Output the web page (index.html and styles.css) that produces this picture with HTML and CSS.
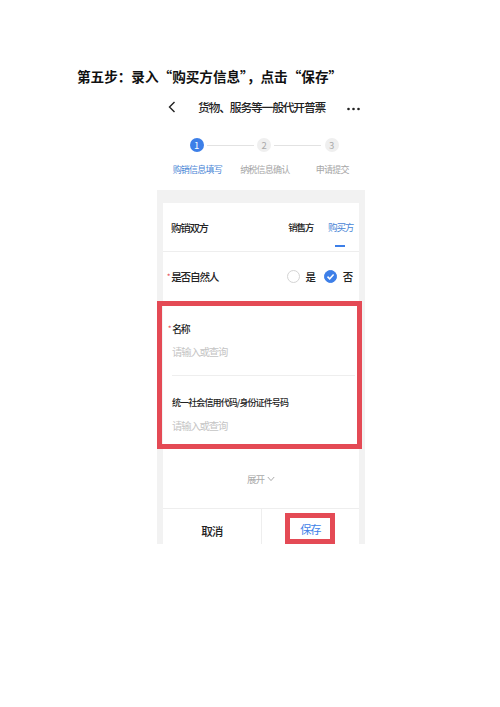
FILE: index.html
```html
<!DOCTYPE html>
<html lang="zh-CN">
<head>
    <meta charset="UTF-8">
    <meta name="viewport" content="width=device-width, initial-scale=1.0">
    <title>第五步</title>
    <link rel="stylesheet" href="styles.css">
</head>
<body>
    <p class="intro">第五步：录入“购买方信息”，点击“保存”</p>

    <div class="phone">
        <!-- 顶部导航 -->
        <div class="nav">
            <svg class="back" width="8" height="12" viewBox="0 0 8 12"><polyline points="6.5,1 1.5,6 6.5,11" fill="none" stroke="#222" stroke-width="1.4"/></svg>
            <span class="nav-title">货物、服务等一般代开普票</span>
            <svg class="more" width="13" height="4" viewBox="0 0 13 4"><circle cx="1.5" cy="2" r="1.3" fill="#222"/><circle cx="6.5" cy="2" r="1.3" fill="#222"/><circle cx="11.5" cy="2" r="1.3" fill="#222"/></svg>
        </div>

        <!-- 步骤条 -->
        <div class="steps">
            <div class="step active"><span class="dot">1</span><span class="step-label">购销信息填写</span></div>
            <div class="step"><span class="dot">2</span><span class="step-label">纳税信息确认</span></div>
            <div class="step"><span class="dot">3</span><span class="step-label">申请提交</span></div>
        </div>

        <div class="page">
            <div class="card">
                <div class="card-head">
                    <span>购销双方</span>
                    <div class="tabs">
                        <span class="tab">销售方</span>
                        <span class="tab on">购买方</span>
                    </div>
                </div>

                <div class="row">
                    <span class="req">是否自然人</span>
                    <div class="choices">
                        <span class="radio"></span><span>是</span>
                        <span class="radio on"><svg width="9" height="9" viewBox="0 0 9 9"><polyline points="1.5,4.6 3.7,6.8 7.6,2.4" fill="none" stroke="#fff" stroke-width="1.5"/></svg></span><span>否</span>
                    </div>
                </div>

                <div class="fields">
                    <div class="field">
                        <div class="field-label req">名称</div>
                        <div class="placeholder">请输入或查询</div>
                    </div>
                    <div class="field">
                        <div class="field-label long">统一社会信用代码/身份证件号码</div>
                        <div class="placeholder">请输入或查询</div>
                    </div>
                    <!-- 红色标注框 -->
                    <div class="mark"></div>
                </div>

                <div class="expand">展开<svg width="8" height="6" viewBox="0 0 8 6"><polyline points="0.8,1 4,4.6 7.2,1" fill="none" stroke="#aaa" stroke-width="1"/></svg></div>

                <div class="actions">
                    <div class="act">取消</div>
                    <div class="act"><span class="save">保存</span></div>
                </div>
            </div>
        </div>
    </div>
</body>
</html>
```

FILE: styles.css
```css
body {
    margin: 0;
    background-color: #fff;
    font-family: "Noto Sans CJK SC", "Liberation Sans", sans-serif;
    color: #222;
}

.intro {
    margin: 66px 0 6px 77px;
    font-size: 13.6px;
    line-height: 20px;
    font-weight: bold;
    color: #111;
}

.phone {
    width: 208px;
    margin-left: 157px;
}

/* 导航 */
.nav {
    display: flex;
    align-items: center;
    height: 30px;
    padding-left: 11px;
}

.nav-title {
    margin-left: 22px;
    font-size: 11.8px;
    letter-spacing: -1.2px;
    line-height: 14px;
    font-weight: 500;
    white-space: nowrap;
}

.more {
    margin-left: 22px;
    margin-top: 3px;
}

/* 步骤条 */
.steps {
    display: grid;
    grid-template-columns: repeat(3, 67.5px);
    margin-left: 6px;
    padding: 16px 0 14px;
}

.step {
    position: relative;
    display: flex;
    flex-direction: column;
    align-items: center;
}

.step:not(:last-child)::after {
    content: "";
    position: absolute;
    top: 7px;
    left: calc(50% + 10px);
    width: 47px;
    height: 1px;
    background-color: #e2e2e2;
}

.dot {
    width: 14px;
    height: 14px;
    border-radius: 50%;
    background-color: #efefef;
    color: #aaa;
    font-size: 9.5px;
    line-height: 14px;
    text-align: center;
}

.step-label {
    margin-top: 12px;
    padding-left: 1px;
    font-size: 9px;
    letter-spacing: -0.8px;
    line-height: 12px;
    color: #a5a5a5;
    white-space: nowrap;
}

.step.active .dot {
    background-color: #3d7fe8;
    color: #fff;
}

.step.active .step-label {
    color: #4a86d6;
}

/* 灰色页面 */
.page {
    background-color: #f2f2f2;
    padding: 13px 6px 0;
}

.card {
    background-color: #fff;
}

.card-head {
    display: flex;
    justify-content: space-between;
    align-items: center;
    height: 48px;
    padding: 0 6px 0 8px;
    border-bottom: 1px solid #eee;
    font-size: 10.4px;
    letter-spacing: -1.2px;
    font-weight: 500;
}

.tabs {
    display: flex;
    gap: 15px;
}

.tab {
    position: relative;
    font-size: 9.6px;
    letter-spacing: -1.3px;
}

.tab.on {
    color: #4a86d6;
    font-weight: 400;
}

.tab.on::after {
    content: "";
    position: absolute;
    left: 7px;
    top: 25px;
    width: 10px;
    height: 2px;
    background-color: #3d7fe8;
}

.row {
    display: flex;
    justify-content: space-between;
    align-items: center;
    height: 49px;
    padding: 0 7px 0 8px;
    font-size: 10.6px;
    letter-spacing: -1.2px;
    font-weight: 500;
}

.req::before {
    content: "*";
    color: #e5484f;
    font-size: 7px;
    margin-right: 2px;
    vertical-align: 2px;
}

.row .req {
    margin-left: -4px;
}

.choices {
    display: flex;
    align-items: center;
    gap: 6px;
    font-size: 10.4px;
}

.radio {
    display: flex;
    align-items: center;
    justify-content: center;
    width: 11px;
    height: 11px;
    border: 1px solid #d4d4d4;
    border-radius: 50%;
}

.radio.on {
    margin-left: 3px;
    border-color: #3d7fe8;
    background-color: #3d7fe8;
}

/* 名称/代码 */
.fields {
    position: relative;
}

.field {
    margin: 0 4px 0 9px;
    padding: 20px 0 16px;
}

.field:first-child {
    border-bottom: 1px solid #eee;
}

.field-label {
    font-size: 9.8px;
    letter-spacing: -1.2px;
    line-height: 14px;
    font-weight: 500;
}

.fields .req {
    margin-left: -4px;
}

.field-label.long {
    font-size: 9px;
    letter-spacing: -0.9px;
}

.placeholder {
    margin-top: 9px;
    font-size: 10.3px;
    letter-spacing: -1.1px;
    line-height: 14px;
    color: #c4c4c4;
}

.mark {
    position: absolute;
    top: 0;
    bottom: 0;
    left: -6px;
    right: -3px;
    border: 5px solid #e44a55;
    pointer-events: none;
}

.expand {
    display: flex;
    justify-content: center;
    align-items: center;
    gap: 3px;
    height: 59px;
    border-bottom: 1px solid #eee;
    font-size: 9.6px;
    letter-spacing: -1.1px;
    color: #aaa;
}

.actions {
    display: flex;
    height: 35px;
}

.act {
    flex: 1;
    display: flex;
    justify-content: center;
    align-items: flex-start;
    padding-top: 15px;
    font-size: 11.6px;
    letter-spacing: -1.2px;
    line-height: 14px;
    font-weight: 500;
}

.act:last-child {
    border-left: 1px solid #eee;
    padding-top: 4px;
}

.save {
    display: block;
    width: 40px;
    height: 21px;
    border: 5px solid #e44a55;
    text-align: center;
    line-height: 23px;
    font-size: 11.2px;
    font-weight: 400;
    color: #3d7fe8;
}
```
